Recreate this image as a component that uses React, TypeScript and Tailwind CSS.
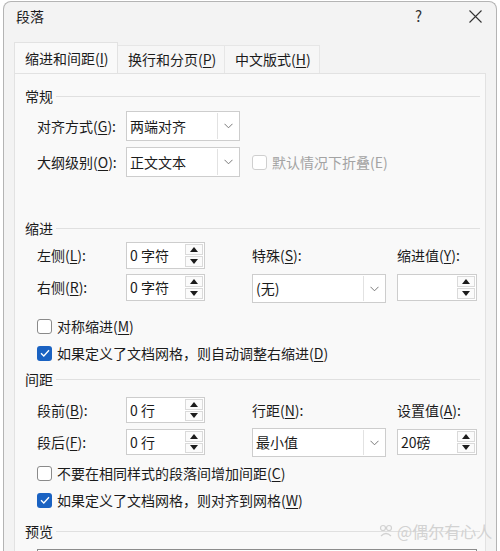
import React from "react";

const font = { fontFamily: '"Noto Sans CJK SC", "Noto Sans", sans-serif' };

function Key({ children }: { children: React.ReactNode }) {
  return <span className="underline underline-offset-2">{children}</span>;
}

function Chevron() {
  return (
    <svg width="9" height="6" viewBox="0 0 9 6" fill="none">
      <path d="M0.5 0.8 L4.5 4.8 L8.5 0.8" stroke="#6b6b6b" strokeWidth="0.9" />
    </svg>
  );
}

function Select({ value, width, height = 30 }: { value: string; width: number; height?: number }) {
  return (
    <div
      className="flex border border-[#cdcdcd] bg-white"
      style={{ width, height }}
    >
      <div className="flex flex-1 items-center pl-[3px] text-[14px] text-[#1b1b1b]">{value}</div>
      <div className="my-[1px] mr-[1px] flex w-[21px] items-center justify-center border-l border-[#e2e2e2]">
        <Chevron />
      </div>
    </div>
  );
}

function Arrow({ up }: { up?: boolean }) {
  return (
    <svg width="8" height="5" viewBox="0 0 8 5">
      <path d={up ? "M4 0 L8 5 L0 5 Z" : "M0 0 L8 0 L4 5 Z"} fill="#1b1b1b" />
    </svg>
  );
}

function Spin({ value, width = 79, height = 27 }: { value: string; width?: number; height?: number }) {
  return (
    <div className="flex border border-[#cdcdcd] bg-white" style={{ width, height }}>
      <div className="flex flex-1 items-center pl-[3px] text-[14px] text-[#1b1b1b]">{value}</div>
      <div className="flex w-[20px] flex-col gap-[1px] p-[1px]">
        <div className="flex flex-1 items-center justify-center border border-[#dadada] bg-[#fbfbfb]">
          <Arrow up />
        </div>
        <div className="flex flex-1 items-center justify-center border border-[#dadada] bg-[#fbfbfb]">
          <Arrow />
        </div>
      </div>
    </div>
  );
}

function Check({ checked, disabled, children }: { checked?: boolean; disabled?: boolean; children: React.ReactNode }) {
  return (
    <div className="flex h-[20px] items-center gap-[5px]">
      {checked ? (
        <div className="flex h-[15px] w-[15px] items-center justify-center rounded-[3px] bg-[#1a62c2]">
          <svg width="10" height="8" viewBox="0 0 10 8" fill="none">
            <path d="M1 4.2 L3.8 7 L9 1.2" stroke="white" strokeWidth="1.3" />
          </svg>
        </div>
      ) : (
        <div
          className={`h-[15px] w-[15px] rounded-[3px] border bg-white ${
            disabled ? "border-[#cfcfcf]" : "border-[#8a8a8a]"
          }`}
        />
      )}
      <span className={`text-[14px] ${disabled ? "text-[#a3a3a3]" : "text-[#1b1b1b]"}`}>{children}</span>
    </div>
  );
}

function Group({ title }: { title: string }) {
  return (
    <div className="ml-[10px] mr-[5px] flex h-[20px] items-center gap-[3px]">
      <span className="text-[14px] text-[#1b1b1b]">{title}</span>
      <div className="h-px flex-1 bg-[#e0e0e0]" />
    </div>
  );
}

function Label({ children, w = 89 }: { children: React.ReactNode; w?: number }) {
  return (
    <div className="text-[14px] text-[#1b1b1b]" style={{ width: w }}>
      {children}
    </div>
  );
}

export default function App() {
  return (
    <div className="relative h-[551px] w-[500px] overflow-hidden bg-white" style={font}>
      <div className="ml-[3px] mt-[1px] h-[560px] w-[494px] rounded-t-[8px] border-x border-t border-[#b4b4b4] bg-[#f3f3f3]">
        {/* title bar */}
        <div className="flex h-[28px] items-center pl-[12px] pr-[14px]">
          <span className="text-[14px] text-[#1b1b1b]">段落</span>
          <span className="ml-auto mr-[47px] text-[15px] text-[#333]">?</span>
          <svg width="13" height="13" viewBox="0 0 13 13">
            <path d="M0.5 0.5 L12.5 12.5 M12.5 0.5 L0.5 12.5" stroke="#333" strokeWidth="1.1" />
          </svg>
        </div>

        {/* tabs */}
        <div className="mt-[12px] flex items-end pl-[10px]">
          <div className="flex h-[31px] w-[104px] items-center border border-b-0 border-[#e2e2e2] bg-[#f9f9f9] pl-[10px] text-[14px] text-[#1b1b1b]">
            缩进和间距(<Key>I</Key>)
          </div>
          <div className="flex h-[28px] w-[107px] items-center border-r border-t border-[#e6e6e6] bg-[#f6f6f6] pl-[10px] text-[14px] text-[#1b1b1b]">
            换行和分页(<Key>P</Key>)
          </div>
          <div className="flex h-[28px] w-[95px] items-center border-r border-t border-[#e6e6e6] bg-[#f6f6f6] pl-[10px] text-[14px] text-[#1b1b1b]">
            中文版式(<Key>H</Key>)
          </div>
        </div>

        {/* tab panel */}
        <div className="ml-[10px] h-[500px] w-[472px] border border-[#e2e2e2] bg-[#f9f9f9] pt-[12px]">
          <Group title="常规" />
          <div className="ml-[22px] mt-[5px] flex items-center">
            <Label>
              对齐方式(<Key>G</Key>):
            </Label>
            <Select value="两端对齐" width={114} />
          </div>
          <div className="ml-[22px] mt-[6px] flex items-center">
            <Label>
              大纲级别(<Key>O</Key>):
            </Label>
            <Select value="正文文本" width={114} />
            <div className="ml-[12px]">
              <Check disabled>默认情况下折叠(E)</Check>
            </div>
          </div>

          <div className="mt-[41px]">
            <Group title="缩进" />
          </div>
          <div className="ml-[22px] mt-[4px] flex h-[27px] items-center">
            <Label>
              左侧(<Key>L</Key>):
            </Label>
            <Spin value="0 字符" />
            <div className="ml-[47px]">
              <Label w={145}>
                特殊(<Key>S</Key>):
              </Label>
            </div>
            <Label w={80}>
              缩进值(<Key>Y</Key>):
            </Label>
          </div>
          <div className="ml-[22px] mt-[5px] flex items-start">
            <div className="flex h-[27px] items-center">
              <Label>
                右侧(<Key>R</Key>):
              </Label>
              <Spin value="0 字符" />
            </div>
            <div className="ml-[47px]">
              <Select value="(无)" width={134} height={29} />
            </div>
            <div className="ml-[11px]">
              <Spin value="" width={80} />
            </div>
          </div>
          <div className="ml-[22px] mt-[13px]">
            <Check>
              对称缩进(<Key>M</Key>)
            </Check>
          </div>
          <div className="ml-[22px] mt-[7px]">
            <Check checked>
              如果定义了文档网格，则自动调整右缩进(<Key>D</Key>)
            </Check>
          </div>

          <div className="mt-[6px]">
            <Group title="间距" />
          </div>
          <div className="ml-[22px] mt-[8px] flex h-[26px] items-center">
            <Label>
              段前(<Key>B</Key>):
            </Label>
            <Spin value="0 行" height={26} />
            <div className="ml-[47px]">
              <Label w={145}>
                行距(<Key>N</Key>):
              </Label>
            </div>
            <Label w={80}>
              设置值(<Key>A</Key>):
            </Label>
          </div>
          <div className="ml-[22px] mt-[5px] flex items-start">
            <div className="mt-[1px] flex h-[26px] items-center">
              <Label>
                段后(<Key>F</Key>):
              </Label>
              <Spin value="0 行" height={26} />
            </div>
            <div className="ml-[47px]">
              <Select value="最小值" width={134} height={29} />
            </div>
            <div className="ml-[11px] mt-[1px]">
              <Spin value="20磅" width={80} height={26} />
            </div>
          </div>
          <div className="ml-[22px] mt-[6px]">
            <Check>
              不要在相同样式的段落间增加间距(<Key>C</Key>)
            </Check>
          </div>
          <div className="ml-[22px] mt-[7px]">
            <Check checked>
              如果定义了文档网格，则对齐到网格(<Key>W</Key>)
            </Check>
          </div>

          <div className="mt-[11px]">
            <Group title="预览" />
          </div>
          <div className="ml-[22px] mr-[8px] mt-[8px] h-[40px] border border-[#8c8c8c] bg-white" />
        </div>
      </div>

      {/* watermark */}
      <div className="absolute left-[378px] top-[519px] flex items-center gap-[3px] text-[16px] text-[#d2d2d2]">
        <svg width="16" height="16" viewBox="0 0 16 16" fill="none" stroke="#d2d2d2" strokeWidth="1.2">
          <circle cx="5" cy="5" r="2.5" />
          <circle cx="11" cy="5" r="2.5" />
          <path d="M3 13 Q8 8 13 13" />
        </svg>
        <span>@偶尔有心人</span>
      </div>
    </div>
  );
}
